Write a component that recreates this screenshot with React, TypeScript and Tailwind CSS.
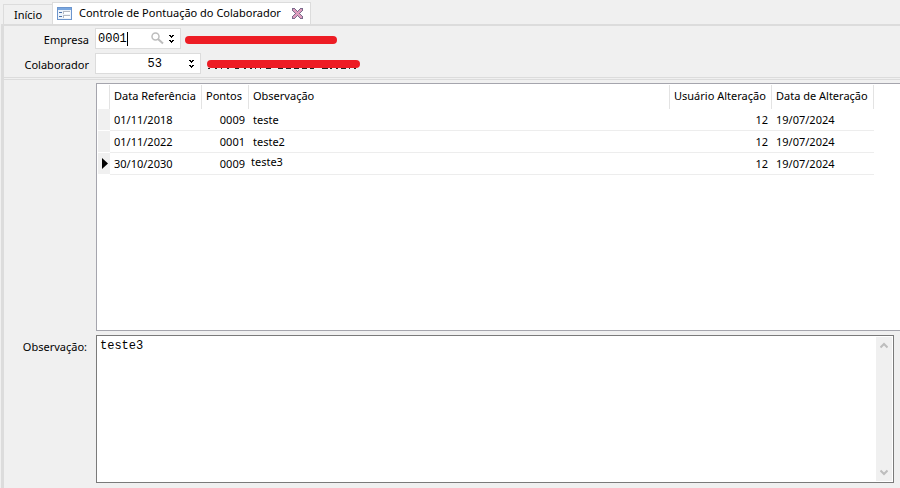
const rows = [
  { date: "01/11/2018", points: "0009", note: "teste", user: "12", changed: "19/07/2024" },
  { date: "01/11/2022", points: "0001", note: "teste2", user: "12", changed: "19/07/2024" },
  { date: "30/10/2030", points: "0009", note: "teste3", user: "12", changed: "19/07/2024" },
];

function FormIcon() {
  return (
    <svg width="15" height="13" viewBox="0 0 15 13" shapeRendering="crispEdges">
      <rect x="0" y="0" width="15" height="13" fill="#6c95cd" />
      <rect x="1" y="1" width="13" height="2" fill="#7aa7e0" />
      <rect x="1" y="3" width="13" height="9" fill="#eef4fb" />
      <path d="M2 5h3v1H2zM2 9h3v1H2z" fill="#4a6fa5" />
      <path d="M6 4h7v1H7v2H6zM6 8h7v1H7v2H6z" fill="#b4b9c2" />
      <path d="M7 5h6v2H7zM7 9h6v2H7z" fill="#fff" />
    </svg>
  );
}

function CloseIcon() {
  return (
    <svg width="11" height="11" viewBox="0 0 11 11" shapeRendering="crispEdges">
      <path
        d="M0 0h3v1h1v1h1v1h1V2h1V1h1V0h3v3h-1v1H9v1H8v1h1v1h1v1h1v3H8v-1H7V9H6V8H5v1H4v1H3v1H0V8h1V7h1V6h1V5H2V4H1V3H0z"
        fill="#7a6c8c"
      />
      <path
        d="M1 1h2v1H1zM8 1h2v1H8zM1 2h3v1H1zM7 2h3v1H7zM2 3h3v1H2zM6 3h3v1H6zM3 4h5v1H3zM4 5h3v1H4zM3 6h5v1H3zM2 7h3v1H2zM6 7h3v1H6zM1 8h3v1H1zM7 8h3v1H7zM1 9h2v1H1zM8 9h2v1H8z"
        fill="#dd9dbd"
      />
    </svg>
  );
}

function DoubleChevron() {
  return (
    <svg width="5" height="8" viewBox="0 0 5 8" shapeRendering="crispEdges">
      <path d="M0 0h2v1h1V0h2v1H4v1H3v1H2V2H1V1H0zM0 5h2v1h1V5h2v1H4v1H3v1H2V7H1V6H0z" fill="#000" />
    </svg>
  );
}

function SearchIcon() {
  return (
    <svg width="13" height="13" viewBox="0 0 13 13" fill="none">
      <circle cx="4.500" cy="4.500" r="3.500" stroke="#bdbdbd" strokeWidth="1.500" />
      <path d="M7 7l5 4.500" stroke="#bdbdbd" strokeWidth="2" />
    </svg>
  );
}

function ScrollArrow({ down = false }: { down?: boolean }) {
  return (
    <svg width="8" height="7" viewBox="0 0 8 7" fill="none" className={down ? "rotate-180" : ""}>
      <path d="M.5 5.500L4 2l3.500 3.500" stroke="#bdbdbd" strokeWidth="2" />
    </svg>
  );
}

export default function App() {
  return (
    <div className="flex min-h-screen flex-col bg-[#f0f0f0] font-['Noto_Sans','Open_Sans',sans-serif] text-[11px] leading-4 text-black">
      <nav className="flex h-6 items-end pl-[3px]">
        <button className="h-5 w-[49px] border-t border-l border-[#dcdcdc]">Início</button>
        <div className="-mb-px flex h-[23px] w-[259px] items-center border border-b-0 border-[#dcdcdc] bg-white pr-[7px] pb-[2px] pl-1">
          <FormIcon />
          <button className="ml-[7px] flex-1 text-left whitespace-nowrap">
            Controle de Pontuação do Colaborador
          </button>
          <button aria-label="Fechar">
            <CloseIcon />
          </button>
        </div>
      </nav>

      <main className="ml-px flex flex-1 flex-col border-t border-l-3 border-[#dcdcdc]">
        <form className="flex flex-col gap-1 border-t border-b border-[#dcdcdc] pt-[2px] pb-[3px]">
          <div className="flex items-center">
            <label htmlFor="empresa" className="w-[85px] pt-[2px] text-right">
              Empresa
            </label>
            <div className="ml-[6px] flex h-[21px] w-[86px] items-center border border-[#dcdcdc] bg-white pr-[6px] pl-[2px]">
              <input
                id="empresa"
                defaultValue="0001"
                className="w-[29px] font-['Liberation_Mono',monospace] text-[12px] leading-4 outline-none"
              />
              <span className="h-[14px] w-px bg-black" />
              <button type="button" aria-label="Pesquisar" className="ml-auto">
                <SearchIcon />
              </button>
              <button type="button" aria-label="Abrir empresa" className="ml-[5px]">
                <DoubleChevron />
              </button>
            </div>
            <svg width="154" height="10" viewBox="0 0 154 10" className="mt-[2px] ml-[3px]">
              <path d="M5 5h144" stroke="#ed1c24" strokeWidth="8" strokeLinecap="round" />
            </svg>
          </div>
          <div className="flex items-center">
            <label htmlFor="colaborador" className="w-[85px] pt-[2px] text-right">
              Colaborador
            </label>
            <div className="ml-[6px] flex h-[21px] w-[106px] items-center justify-between border border-[#dcdcdc] bg-white pr-[6px]">
              <input
                id="colaborador"
                defaultValue="53"
                className="w-[66px] text-right font-['Liberation_Mono',monospace] text-[12px] leading-4 outline-none"
              />
              <button type="button" aria-label="Abrir colaborador">
                <DoubleChevron />
              </button>
            </div>
            <svg width="156" height="12" viewBox="0 0 156 12" className="mt-[2px] ml-[5px]">
              <path
                d="M2 9.500h2m5 0h2m4 0h1m5 0h2m6 0h4m5 0h2m4 0h2m3 0h1m4 0h1m5 0h5m7 0h5m3 0h5m3 0h5m3 0h5m3 0h4m8 0h6m2 0h2m4 0h2m3 0h5m3 0h1m4 0h2"
                stroke="#222"
              />
              <path d="M5 5h145" stroke="#ed1c24" strokeWidth="8" strokeLinecap="round" />
            </svg>
          </div>
        </form>

        <div className="mt-px flex flex-1 flex-col gap-1 border-t border-[#dcdcdc] pt-[3px] pb-[5px] pl-[92px]">
          <section className="flex-1 border border-r-0 border-[#a5a5ad] bg-white pt-px pr-[26px] pl-px">
            <table className="w-full table-fixed border-separate border-spacing-0 whitespace-nowrap">
              <thead>
                <tr className="h-6 text-left">
                  <th className="w-3 border-r border-[#e3e3e3]" aria-label="Linha atual" />
                  <th className="w-[92px] border-r border-[#e3e3e3] p-0 pb-[2px] pl-1 font-normal">Data Referência</th>
                  <th className="w-[47px] border-r border-[#e3e3e3] p-0 pb-[2px] pl-1 font-normal">Pontos</th>
                  <th className="border-r border-[#e3e3e3] p-0 pb-[2px] pl-1 font-normal">Observação</th>
                  <th className="w-[102px] border-r border-[#e3e3e3] p-0 pb-[2px] pl-1 font-normal">Usuário Alteração</th>
                  <th className="w-[102px] border-r border-[#e3e3e3] p-0 pb-[2px] pl-1 font-normal">Data de Alteração</th>
                </tr>
              </thead>
              <tbody>
                {rows.map((row, i) => {
                  const editing = i === rows.length - 1;
                  return (
                    <tr key={row.date} className="h-[22px]">
                      <td className="border-b border-white bg-[#f0f0f0] p-0">
                        {editing && (
                          <svg width="6" height="11" viewBox="0 0 6 11" className="ml-1">
                            <path d="M0 0l6 5.500L0 11z" fill="#000" />
                          </svg>
                        )}
                      </td>
                      <td className="border-b border-[#ededed] p-0 pl-1">{row.date}</td>
                      <td className="border-b border-[#ededed] p-0 pr-1 text-right">{row.points}</td>
                      <td className={editing ? "border-b border-[#ededed] p-0 pb-1 pl-[2px]" : "border-b border-[#ededed] p-0 pl-1"}>
                        {editing ? (
                          <input
                            aria-label="Observação da linha"
                            defaultValue={row.note}
                            className="block h-4 w-full outline-none"
                          />
                        ) : (
                          row.note
                        )}
                      </td>
                      <td className="border-b border-[#ededed] p-0 pr-1 text-right">{row.user}</td>
                      <td className="border-b border-[#ededed] p-0 pl-1">{row.changed}</td>
                    </tr>
                  );
                })}
              </tbody>
            </table>
          </section>

          <section className="-ml-[92px] flex pr-[6px]">
            <label htmlFor="observacao" className="w-[92px] pt-1 pr-[9px] text-right">
              Observação:
            </label>
            <div className="flex h-[148px] flex-1 border border-[#7a7a7a] bg-white p-px">
              <textarea
                id="observacao"
                defaultValue="teste3"
                className="flex-1 resize-none pt-px pl-[2px] font-['Liberation_Mono',monospace] text-[12px] leading-4 outline-none"
              />
              <div className="flex w-4 flex-col items-center justify-between bg-[#f0f0f0] py-[5px]">
                <button aria-label="Rolar para cima">
                  <ScrollArrow />
                </button>
                <button aria-label="Rolar para baixo">
                  <ScrollArrow down />
                </button>
              </div>
            </div>
          </section>
        </div>
      </main>
    </div>
  );
}
